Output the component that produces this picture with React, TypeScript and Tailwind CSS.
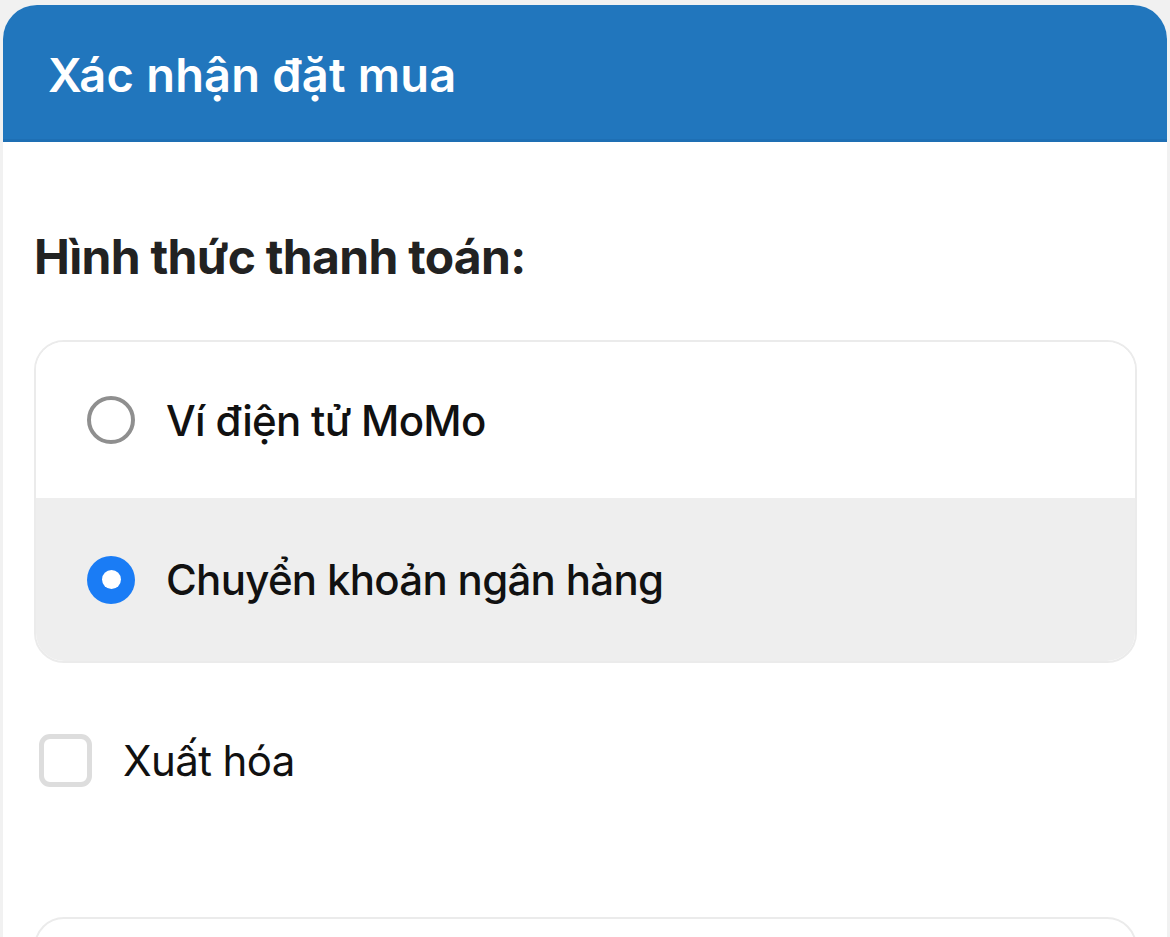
import { useState } from 'react';

const METHODS = [
  { key: 'momo', label: 'Ví điện tử MoMo' },
  { key: 'bank', label: 'Chuyển khoản ngân hàng' },
] as const;

type MethodKey = typeof METHODS[number]['key'];

function Radio({ checked }: { checked: boolean }) {
  return checked ? (
    <div className="w-[48px] h-[48px] rounded-full bg-[#1a7cf5] flex items-center justify-center shrink-0">
      <div className="w-[19px] h-[19px] rounded-full bg-white" />
    </div>
  ) : (
    <div className="w-[48px] h-[48px] rounded-full border-[4px] border-[#8f8f8f] bg-white shrink-0" />
  );
}

export default function App() {
  const [method, setMethod] = useState<MethodKey>('bank');
  const [invoice, setInvoice] = useState(false);

  return (
    <div
      className="min-h-[937px] bg-[#f1f1f1] pl-[3px] pr-[3px] pt-[5px] overflow-hidden"
      style={{ fontFamily: 'Inter, "Noto Sans", sans-serif' }}
    >
      <div className="bg-white rounded-t-[34px] h-[932px] overflow-hidden">
        {/* Header */}
        <div className="h-[137px] bg-[#2176bd] border-b-[3px] border-[#1e6fb4] pl-[45px] pt-[41px]">
          <h1 className="text-[47px] leading-[58px] font-semibold text-white tracking-[0.2px]">Xác nhận đặt mua</h1>
        </div>

        <div className="pl-[31px] pr-[30px]">
          <h2 className="mt-[86px] text-[48px] leading-[58px] font-bold text-[#222] tracking-[-0.7px]">
            Hình thức thanh toán:
          </h2>

          {/* Payment methods */}
          <div className="mt-[54px] border-2 border-[#ebebeb] rounded-[30px] overflow-hidden">
            {METHODS.map((m, i) => {
              const on = method === m.key;
              return (
                <button
                  key={m.key}
                  onClick={() => setMethod(m.key)}
                  className={`w-full flex items-center gap-[31px] pl-[51px] text-left ${
                    i === 0 ? 'h-[156px]' : 'h-[163px]'
                  } ${on ? 'bg-[#eeeeee]' : 'bg-white'}`}
                >
                  <Radio checked={on} />
                  <span className="text-[42px] font-medium text-[#111] tracking-[-0.7px]">{m.label}</span>
                </button>
              );
            })}
          </div>

          {/* Invoice */}
          <button onClick={() => setInvoice(!invoice)} className="mt-[66px] flex items-center gap-[31px] pl-[5px]">
            <div
              className={`w-[53px] h-[53px] rounded-[11px] border-[5px] ${
                invoice ? 'border-[#1a7cf5] bg-[#1a7cf5]' : 'border-[#dddddd] bg-white'
              }`}
            />
            <span className="text-[42px] font-normal text-[#111] tracking-[-0.6px]">Xuất hóa</span>
          </button>

          {/* Next card (cut off) */}
          <div className="mt-[125px] h-[120px] border-2 border-[#ebebeb] rounded-[30px]" />
        </div>
      </div>
    </div>
  );
}
